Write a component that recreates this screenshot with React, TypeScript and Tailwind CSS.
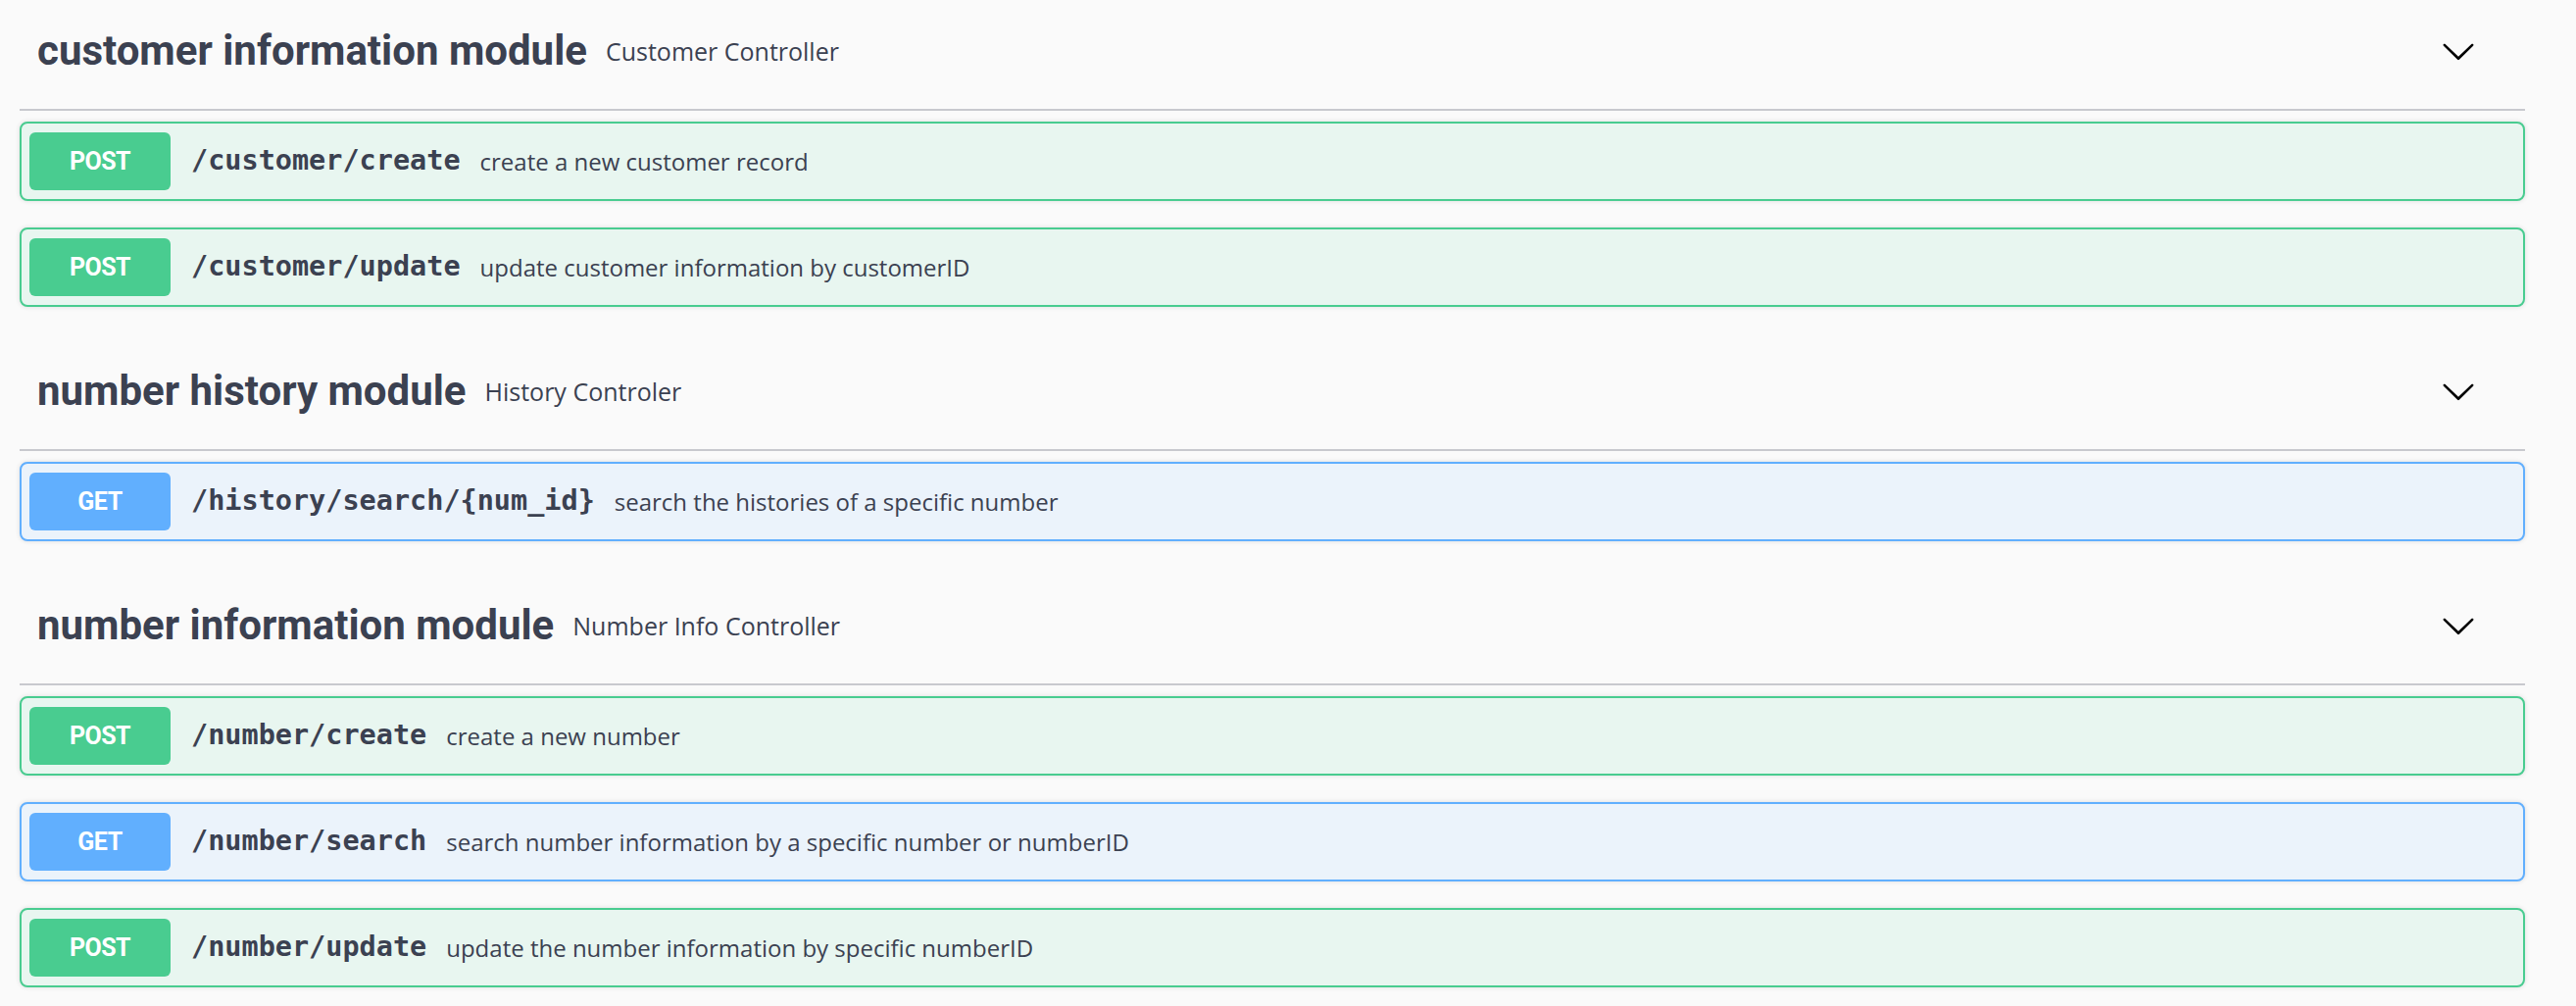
import { ReactNode } from "react";

type Method = "GET" | "POST";

type Operation = {
  method: Method;
  path: string;
  summary: string;
};

type Tag = {
  name: string;
  description: string;
  operations: Operation[];
};

const TAGS: Tag[] = [
  {
    name: "customer information module",
    description: "Customer Controller",
    operations: [
      { method: "POST", path: "/customer/create", summary: "create a new customer record" },
      { method: "POST", path: "/customer/update", summary: "update customer information by customerID" },
    ],
  },
  {
    name: "number history module",
    description: "History Controler",
    operations: [
      { method: "GET", path: "/history/search/{num_id}", summary: "search the histories of a specific number" },
    ],
  },
  {
    name: "number information module",
    description: "Number Info Controller",
    operations: [
      { method: "POST", path: "/number/create", summary: "create a new number" },
      { method: "GET", path: "/number/search", summary: "search number information by a specific number or numberID" },
      { method: "POST", path: "/number/update", summary: "update the number information by specific numberID" },
    ],
  },
];

const METHOD_STYLES: Record<Method, { card: string; badge: string }> = {
  POST: { card: "border-[#49cc90] bg-[#e8f6f0]", badge: "bg-[#49cc90]" },
  GET: { card: "border-[#61affe] bg-[#ebf3fb]", badge: "bg-[#61affe]" },
};

function Chevron() {
  return (
    <svg viewBox="0 0 20 20" className="size-[36px] shrink-0" fill="#000">
      <path d="M17.418 6.109c.272-.268.709-.268.979 0s.271.701 0 .969l-7.908 7.83c-.27.268-.707.268-.979 0l-7.908-7.83c-.27-.268-.27-.701 0-.969.271-.268.709-.268.979 0L10 13.25l7.418-7.141z" />
    </svg>
  );
}

function OperationRow({ op }: { op: Operation }) {
  const styles = METHOD_STYLES[op.method];
  return (
    <div
      className={`mb-[27px] flex h-[81px] items-center rounded-[8px] border-2 pl-[8px] shadow-[0_0_5px_rgba(0,0,0,0.12)] ${styles.card}`}
    >
      <span
        className={`flex h-[59px] w-[144px] shrink-0 items-center justify-center rounded-[6px] font-['Roboto'] text-[25px] leading-none font-bold tracking-[-0.5px] text-white ${styles.badge}`}
      >
        {op.method}
      </span>
      <span className="ml-[21px] font-['DejaVu_Sans_Mono',monospace] text-[28.5px] leading-none font-bold text-[#3b4151]">
        {op.path}
      </span>
      <span className="ml-[20px] font-['Open_Sans',sans-serif] text-[24px] leading-none text-[#3b4151]">
        {op.summary}
      </span>
    </div>
  );
}

function TagSection({ tag }: { tag: Tag }): ReactNode {
  return (
    <section>
      <div className="flex h-[120px] items-center border-b-2 border-[#c8c9ce] pr-[50px] pl-[18px]">
        <h4 className="font-['Roboto',sans-serif] text-[42px] leading-none font-bold tracking-[0px] text-[#3b4151]">
          {tag.name}
        </h4>
        <small className="ml-[19px] font-['Open_Sans',sans-serif] text-[25px] leading-none text-[#3b4151]">
          {tag.description}
        </small>
        <div className="ml-auto">
          <Chevron />
        </div>
      </div>
      <div className="pt-[11px]">
        {tag.operations.map((op) => (
          <OperationRow key={op.method + op.path} op={op} />
        ))}
      </div>
    </section>
  );
}

export default function App() {
  return (
    <div className="min-h-screen overflow-hidden bg-[#fafafa]">
      <div className="mt-[-7px] mr-[52px] ml-[20px]">
        {TAGS.map((tag) => (
          <TagSection key={tag.name} tag={tag} />
        ))}
      </div>
    </div>
  );
}
